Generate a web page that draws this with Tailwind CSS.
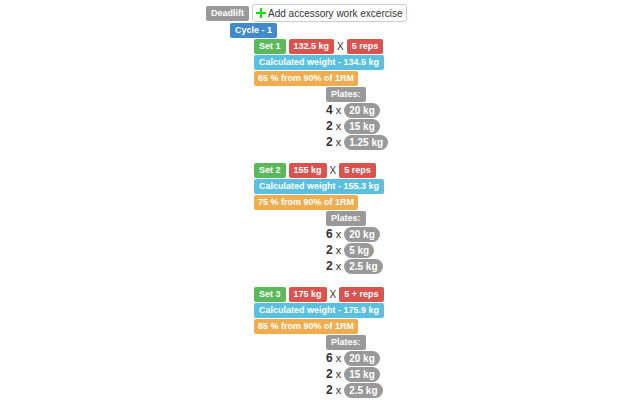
<!DOCTYPE html>
<html lang="en">
<head>
<meta charset="utf-8">
<title>Deadlift</title>
<script src="https://cdn.jsdelivr.net/npm/@tailwindcss/browser@4"></script>
</head>
<body class="bg-white font-['Liberation_Sans',Arial,sans-serif] text-[#333]">
<main class="mx-auto w-full max-w-[228px] pt-1 text-[11px] leading-[15px] whitespace-nowrap">
  <header class="flex items-center gap-[3px]">
    <h1 class="rounded-xs bg-[#999] px-[5px] text-[9px] leading-[15px] font-bold text-white">Deadlift</h1>
    <button type="button" class="flex h-[18px] items-center gap-[2px] rounded-[3px] border border-[#ccc] bg-white px-[3px] text-[10px]">
      <svg class="size-[10px]" viewBox="0 0 10 10" aria-hidden="true"><path d="M4 0h2v4h4v2H6v4H4V6H0V4h4z" fill="#0be00b"/></svg>
      Add accessory work excercise
    </button>
  </header>
  <section class="pt-px pl-6">
    <div class="flex h-4 items-start"><h2 class="rounded-xs bg-[#428bca] px-[5px] text-[9px] leading-[15px] font-bold text-white">Cycle - 1</h2></div>
    <ol class="flex flex-col gap-3 pl-6">
      <li>
        <div class="flex h-4 items-start gap-[3px]">
          <span class="rounded-xs bg-[#5cb85c] px-[5px] text-[9px] leading-[15px] font-bold text-white">Set 1</span>
          <span class="rounded-xs bg-[#d9534f] px-[5px] text-[9px] leading-[15px] font-bold text-white">132.5 kg</span>
          <span class="text-[10px]">X</span>
          <span class="rounded-xs bg-[#d9534f] px-[5px] text-[9px] leading-[15px] font-bold text-white">5 reps</span>
        </div>
        <div class="flex h-4 items-start"><span class="rounded-xs bg-[#5bc0de] px-[5px] text-[9px] leading-[15px] font-bold text-white">Calculated weight - 134.5 kg</span></div>
        <div class="flex h-4 items-start"><span class="rounded-xs bg-[#f0ad4e] px-1 text-[9px] leading-[15px] font-bold text-white">65 % from 90% of 1RM</span></div>
        <div class="pl-18">
          <div class="flex h-4 items-start"><span class="rounded-xs bg-[#999] px-[5px] text-[9px] leading-[15px] font-bold text-white">Plates:</span></div>
          <ul>
            <li class="flex h-4 items-start gap-[3px]"><b class="text-xs leading-[15px]">4</b><span>x</span><span class="rounded-full bg-[#999] px-[5px] text-[10px] leading-[15px] font-bold text-white">20 kg</span></li>
            <li class="flex h-4 items-start gap-[3px]"><b class="text-xs leading-[15px]">2</b><span>x</span><span class="rounded-full bg-[#999] px-[5px] text-[10px] leading-[15px] font-bold text-white">15 kg</span></li>
            <li class="flex h-4 items-start gap-[3px]"><b class="text-xs leading-[15px]">2</b><span>x</span><span class="rounded-full bg-[#999] px-[5px] text-[10px] leading-[15px] font-bold text-white">1.25 kg</span></li>
          </ul>
        </div>
      </li>
      <li>
        <div class="flex h-4 items-start gap-[3px]">
          <span class="rounded-xs bg-[#5cb85c] px-[5px] text-[9px] leading-[15px] font-bold text-white">Set 2</span>
          <span class="rounded-xs bg-[#d9534f] px-[5px] text-[9px] leading-[15px] font-bold text-white">155 kg</span>
          <span class="text-[10px]">X</span>
          <span class="rounded-xs bg-[#d9534f] px-[5px] text-[9px] leading-[15px] font-bold text-white">5 reps</span>
        </div>
        <div class="flex h-4 items-start"><span class="rounded-xs bg-[#5bc0de] px-[5px] text-[9px] leading-[15px] font-bold text-white">Calculated weight - 155.3 kg</span></div>
        <div class="flex h-4 items-start"><span class="rounded-xs bg-[#f0ad4e] px-1 text-[9px] leading-[15px] font-bold text-white">75 % from 90% of 1RM</span></div>
        <div class="pl-18">
          <div class="flex h-4 items-start"><span class="rounded-xs bg-[#999] px-[5px] text-[9px] leading-[15px] font-bold text-white">Plates:</span></div>
          <ul>
            <li class="flex h-4 items-start gap-[3px]"><b class="text-xs leading-[15px]">6</b><span>x</span><span class="rounded-full bg-[#999] px-[5px] text-[10px] leading-[15px] font-bold text-white">20 kg</span></li>
            <li class="flex h-4 items-start gap-[3px]"><b class="text-xs leading-[15px]">2</b><span>x</span><span class="rounded-full bg-[#999] px-[5px] text-[10px] leading-[15px] font-bold text-white">5 kg</span></li>
            <li class="flex h-4 items-start gap-[3px]"><b class="text-xs leading-[15px]">2</b><span>x</span><span class="rounded-full bg-[#999] px-[5px] text-[10px] leading-[15px] font-bold text-white">2.5 kg</span></li>
          </ul>
        </div>
      </li>
      <li>
        <div class="flex h-4 items-start gap-[3px]">
          <span class="rounded-xs bg-[#5cb85c] px-[5px] text-[9px] leading-[15px] font-bold text-white">Set 3</span>
          <span class="rounded-xs bg-[#d9534f] px-[5px] text-[9px] leading-[15px] font-bold text-white">175 kg</span>
          <span class="text-[10px]">X</span>
          <span class="rounded-xs bg-[#d9534f] px-[5px] text-[9px] leading-[15px] font-bold text-white">5 + reps</span>
        </div>
        <div class="flex h-4 items-start"><span class="rounded-xs bg-[#5bc0de] px-[5px] text-[9px] leading-[15px] font-bold text-white">Calculated weight - 175.9 kg</span></div>
        <div class="flex h-4 items-start"><span class="rounded-xs bg-[#f0ad4e] px-1 text-[9px] leading-[15px] font-bold text-white">85 % from 90% of 1RM</span></div>
        <div class="pl-18">
          <div class="flex h-4 items-start"><span class="rounded-xs bg-[#999] px-[5px] text-[9px] leading-[15px] font-bold text-white">Plates:</span></div>
          <ul>
            <li class="flex h-4 items-start gap-[3px]"><b class="text-xs leading-[15px]">6</b><span>x</span><span class="rounded-full bg-[#999] px-[5px] text-[10px] leading-[15px] font-bold text-white">20 kg</span></li>
            <li class="flex h-4 items-start gap-[3px]"><b class="text-xs leading-[15px]">2</b><span>x</span><span class="rounded-full bg-[#999] px-[5px] text-[10px] leading-[15px] font-bold text-white">15 kg</span></li>
            <li class="flex h-4 items-start gap-[3px]"><b class="text-xs leading-[15px]">2</b><span>x</span><span class="rounded-full bg-[#999] px-[5px] text-[10px] leading-[15px] font-bold text-white">2.5 kg</span></li>
          </ul>
        </div>
      </li>
    </ol>
  </section>
</main>
</body>
</html>
